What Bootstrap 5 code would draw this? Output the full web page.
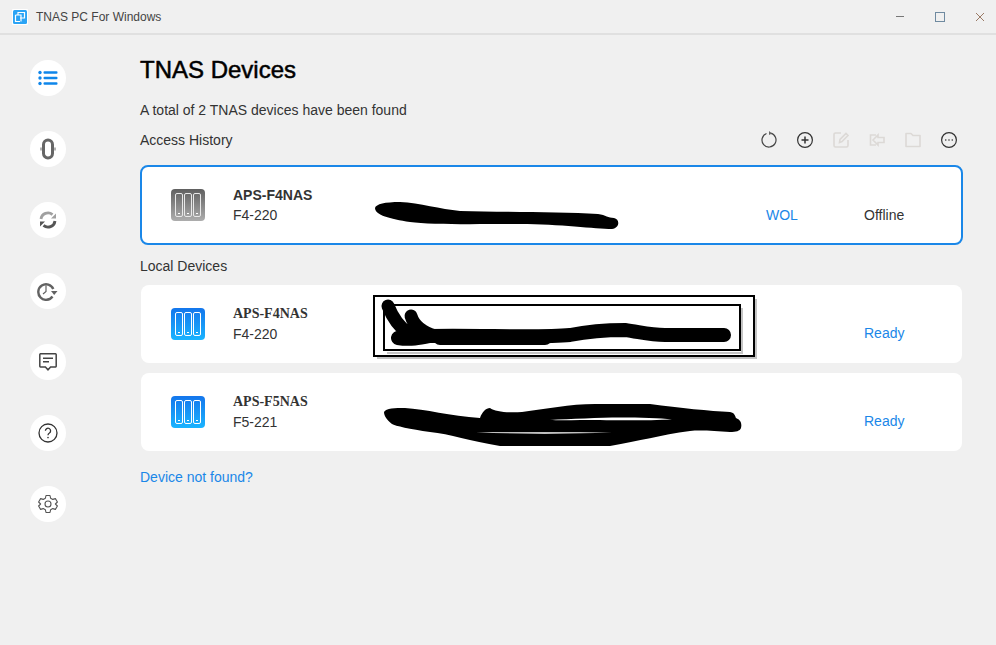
<!DOCTYPE html>
<html lang="en">
<head>
    <meta charset="UTF-8">
    <meta name="viewport" content="width=device-width, initial-scale=1">
    <link href="https://cdn.jsdelivr.net/npm/bootstrap@5.3.3/dist/css/bootstrap.min.css" rel="stylesheet">
    <script src="https://cdn.jsdelivr.net/npm/bootstrap@5.3.3/dist/js/bootstrap.bundle.min.js"></script>
    <title>TNAS PC For Windows</title>
    <style>
        html, body { height: 100%; }
        body { background: #f0f0f0; color: #333; font-family: "Liberation Sans", Arial, sans-serif; font-size: 14px; overflow: hidden; }
        a { color: #1a87e8; text-decoration: none; }
        .title-bar { height: 35px; border-bottom: 2px solid #e0e0e0; padding-left: 12px; font-size: 12px; color: #444; }
        .win-btns { margin-right: -4px; }
        .win-btn { width: 40px; height: 34px; }
        .side-bar { width: 96px; padding-top: 25px; gap: 35px; }
        .side-circle { width: 36px; height: 36px; }
        .main-area { width: 823px; margin-left: 44px; }
        .page-title { font-size: 24px; font-weight: 400; color: #000; -webkit-text-stroke: .5px #000; line-height: 30px; margin: 20px 0 0; }
        .found-line { margin-top: 15px; line-height: 20px; }
        .history-row { height: 32px; margin-top: 4px; margin-bottom: 9px; }
        .tool-gap { gap: 16px; padding-right: 4px; }
        .device-card { height: 78px; border: 0; border-radius: 8px; margin: 0 1px 10px; }
        .device-card.active-card { height: 80px; border: 2px solid #1a87e8; margin: 0; }
        .device-icon { margin-left: 30px; margin-right: 28px; }
        .active-card .device-icon { margin-left: 29px; }
        .device-name { font-weight: 700; line-height: 18px; }
        .name-serif { font-family: "Liberation Serif", serif; }
        .device-model { line-height: 18px; margin-top: 2px; }
        .state-a { position: absolute; left: 624px; top: 38px; }
        .state-b { position: absolute; left: 722px; top: 38px; }
        .state-c { position: absolute; left: 723px; top: 38px; }
        .scrawl { position: absolute; left: 0; top: 0; overflow: visible; }
        .section-label { line-height: 20px; margin: 11px 0 9px; }
        .not-found { line-height: 20px; margin-top: 16px; display: block; }
    </style>
</head>
<body>

<div class="title-bar d-flex align-items-center justify-content-between">
    <div class="d-flex align-items-center gap-2">
        <svg width="16" height="16" viewBox="0 0 16 16">
            <rect width="16" height="16" rx="1" fill="#fff"/>
            <rect x="1" y="1" width="14" height="14" rx="1.5" fill="#2ba4f5"/>
            <path d="M3.5 6V12.5H8M6 6V3.5H12.5V9H8M3.5 6H9V12.5" fill="none" stroke="#fff" stroke-width="1.2"/>
        </svg>
        <span>TNAS PC For Windows</span>
    </div>
    <div class="win-btns d-flex">
        <div class="win-btn d-flex align-items-center justify-content-center">
            <svg width="10" height="10" viewBox="0 0 10 10"><path d="M1 4.5H9" stroke="#777"/></svg>
        </div>
        <div class="win-btn d-flex align-items-center justify-content-center">
            <svg width="10" height="10" viewBox="0 0 10 10"><rect x=".5" y=".5" width="9" height="9" fill="none" stroke="#6f8aa0"/></svg>
        </div>
        <div class="win-btn d-flex align-items-center justify-content-center">
            <svg width="10" height="10" viewBox="0 0 10 10"><path d="M1 1L9 9M9 1L1 9" stroke="#9a7a66"/></svg>
        </div>
    </div>
</div>

<div class="d-flex">
    <div class="side-bar d-flex flex-column align-items-center">
        <div class="side-circle rounded-circle bg-white d-flex align-items-center justify-content-center">
            <svg width="20" height="16" viewBox="0 0 20 16" fill="#0f86ea">
                <circle cx="2" cy="2.5" r="1.7"/><circle cx="2" cy="8" r="1.7"/><circle cx="2" cy="13.5" r="1.7"/>
                <rect x="5.5" y="1.3" width="14" height="2.4" rx="1"/><rect x="5.5" y="6.8" width="14" height="2.4" rx="1"/><rect x="5.5" y="12.3" width="14" height="2.4" rx="1"/>
            </svg>
        </div>
        <div class="side-circle rounded-circle bg-white d-flex align-items-center justify-content-center">
            <svg width="16" height="22" viewBox="0 0 16 22" fill="none" stroke="#666" stroke-width="3">
                <rect x="3.5" y="2" width="9" height="18" rx="4.5"/>
                <path d="M1 9.5V12.5M15 9.5V12.5" stroke-width="1"/>
            </svg>
        </div>
        <div class="side-circle rounded-circle bg-white d-flex align-items-center justify-content-center">
            <svg width="18" height="18" viewBox="0 0 18 18" fill="none" stroke-width="2.8">
                <path d="M2 8A7 7 0 0 1 13.5 3.6" stroke="#a0a0a0"/>
                <path d="M16 10A7 7 0 0 1 4.5 14.4" stroke="#555"/>
                <path d="M12 7.5H17V2.5Z" fill="#a0a0a0" stroke="none"/>
                <path d="M6 10.5H1V15.5Z" fill="#555" stroke="none"/>
            </svg>
        </div>
        <div class="side-circle rounded-circle bg-white d-flex align-items-center justify-content-center">
            <svg width="22" height="20" viewBox="0 0 22 20" fill="none" stroke="#626262" stroke-width="2.4">
                <path d="M16.3 8A7.8 7.8 0 1 0 15.5 15.5"/>
                <path d="M9 4.5V10.5L6 13" stroke-width="1.2"/>
                <path d="M14 10H20.5L17.2 14Z" fill="#626262" stroke="none"/>
            </svg>
        </div>
        <div class="side-circle rounded-circle bg-white d-flex align-items-center justify-content-center">
            <svg width="20" height="20" viewBox="0 0 20 20" fill="none" stroke="#444" stroke-width="1.5">
                <path d="M2.5 1.8H17.5A.8 .8 0 0 1 18.2 2.5V14.2A.8 .8 0 0 1 17.5 15H12.6L10 17.8L7.4 15H2.5A.8 .8 0 0 1 1.8 14.2V2.5A.8 .8 0 0 1 2.5 1.8Z"/>
                <path d="M5 6.2H15M5 9.8H11" stroke-width="1.6"/>
            </svg>
        </div>
        <div class="side-circle rounded-circle bg-white d-flex align-items-center justify-content-center">
            <svg width="20" height="20" viewBox="0 0 20 20" fill="none" stroke="#333" stroke-width="1.3">
                <circle cx="10" cy="10" r="9"/>
                <path d="M7.4 7.8A2.6 2.6 0 1 1 11.4 10C10.4 10.6 10 11 10 12.2"/>
                <circle cx="10" cy="14.6" r=".8" fill="#333" stroke="none"/>
            </svg>
        </div>
        <div class="side-circle rounded-circle bg-white d-flex align-items-center justify-content-center">
            <svg width="20" height="20" viewBox="0 0 20 20" fill="none" stroke="#555" stroke-width="1.1">
                <path d="M8 1.5H12L12.6 4.2L14.8 5.4L17.4 4.6L19.4 8L17.4 10L19.4 12L17.4 15.4L14.8 14.6L12.6 15.8L12 18.5H8L7.4 15.8L5.2 14.6L2.6 15.4L.6 12L2.6 10L.6 8L2.6 4.6L5.2 5.4L7.4 4.2Z" stroke-linejoin="round"/>
                <circle cx="10" cy="10" r="3"/>
            </svg>
        </div>
    </div>

    <div class="main-area position-relative">
        <h1 class="page-title">TNAS Devices</h1>
        <div class="found-line">A total of 2 TNAS devices have been found</div>

        <div class="history-row d-flex align-items-center justify-content-between">
            <span>Access History</span>
            <div class="tool-gap d-flex align-items-center">
                <svg width="20" height="20" viewBox="0 0 20 20" fill="none" stroke="#444" stroke-width="1.2">
                    <path d="M11.5 3.2A7 7 0 1 1 7.5 3.5"/><path d="M10 1L13 3.4L10 5Z" fill="#666" stroke="none"/>
                </svg>
                <svg width="20" height="20" viewBox="0 0 20 20" fill="none" stroke="#333" stroke-width="1.2">
                    <circle cx="10" cy="10" r="7.4"/><path d="M6.5 10H13.5M10 6.5V13.5" stroke-width="1.5"/>
                </svg>
                <svg width="20" height="20" viewBox="0 0 20 20" fill="none" stroke="#dcd9d6" stroke-width="1.6">
                    <path d="M10 3H4.5A1.5 1.5 0 0 0 3 4.5V15.5A1.5 1.5 0 0 0 4.5 17H15.5A1.5 1.5 0 0 0 17 15.5V10"/>
                    <path d="M8.5 12.5L9 9.5L15 3.5L17 5.5L11 11.5Z"/>
                </svg>
                <svg width="20" height="20" viewBox="0 0 20 20" fill="none" stroke="#dcd9d6" stroke-width="1.6">
                    <path d="M9 5H3.5V15H9"/><path d="M6 10L11 5V7.5H17V12.5H11V15Z"/>
                </svg>
                <svg width="20" height="20" viewBox="0 0 20 20" fill="none" stroke="#dcd9d6" stroke-width="1.6">
                    <path d="M3 3.5H8L10 5.5H17V16.5H3Z" stroke-linejoin="round"/>
                </svg>
                <svg width="20" height="20" viewBox="0 0 20 20" fill="none" stroke="#333" stroke-width="1.2">
                    <circle cx="10" cy="10" r="7.4"/>
                    <path d="M6 10H7.4M9.3 10H10.7M12.6 10H14" stroke="#555" stroke-width="1.5"/>
                </svg>
            </div>
        </div>

        <div class="device-card active-card card position-relative flex-row align-items-center">
            <svg class="device-icon" width="34" height="34" viewBox="0 0 34 34">
                <defs>
                    <linearGradient id="grayFill" x1="0" y1="0" x2="0" y2="1"><stop offset="0" stop-color="#606060"/><stop offset="1" stop-color="#adadad"/></linearGradient>
                    <linearGradient id="blueFill" x1="0" y1="0" x2="0" y2="1"><stop offset="0" stop-color="#1476ec"/><stop offset="1" stop-color="#1ab4ff"/></linearGradient>
                </defs>
                <rect width="34" height="32" y="1" rx="4" fill="url(#grayFill)"/>
                <g fill="none" stroke="#e8e8e8"><rect x="4.5" y="5.5" width="7" height="23" rx="1.5"/><rect x="13.5" y="5.5" width="7" height="23" rx="1.5"/><rect x="22.5" y="5.5" width="7" height="23" rx="1.5"/></g>
                <path d="M7 25.5H9M16 25.5H18M25 25.5H27" stroke="#fff"/>
            </svg>
            <div>
                <div class="device-name">APS-F4NAS</div>
                <div class="device-model">F4-220</div>
            </div>
            <a class="state-a" href="#">WOL</a>
            <span class="state-b">Offline</span>
            <svg class="scrawl" width="819" height="76" viewBox="142 167 819 76">
                <path d="M375 208C376 204 385 202 400 202C420 203 440 209 460 211C500 212 560 212 598 214C606 215 608 218 614 218C620 219 620 228 612 229C595 229 560 224 520 224C480 224 430 225 410 222C390 219 375 215 375 208Z" fill="#000"/>
            </svg>
        </div>

        <div class="section-label">Local Devices</div>

        <div class="device-card card position-relative flex-row align-items-center">
            <svg class="device-icon" width="34" height="34" viewBox="0 0 34 34">
                <rect width="34" height="32" y="1" rx="4" fill="url(#blueFill)"/>
                <g fill="none" stroke="#fff"><rect x="4.5" y="5.5" width="7" height="23" rx="1.5"/><rect x="13.5" y="5.5" width="7" height="23" rx="1.5"/><rect x="22.5" y="5.5" width="7" height="23" rx="1.5"/></g>
                <path d="M7 25.5H9M16 25.5H18M25 25.5H27" stroke="#fff"/>
            </svg>
            <div>
                <div class="device-name name-serif">APS-F4NAS</div>
                <div class="device-model">F4-220</div>
            </div>
            <a class="state-c" href="#">Ready</a>
            <svg class="scrawl" width="821" height="78" viewBox="141 285 821 78" fill="none" stroke="#000">
                <path d="M756 299V358H377M742 308V353H387" stroke="#c4c4c4" stroke-width="2"/>
                <rect x="374" y="296" width="380" height="60" stroke-width="2"/>
                <rect x="384" y="305" width="356" height="45" stroke-width="2"/>
                <g stroke-linecap="round" stroke-linejoin="round">
                    <path d="M388 306C392 316 398 326 408 333M411 316C414 326 422 332 435 336" stroke-width="13"/>
                    <path d="M398 338C410 340 420 338 430 336C480 335 540 338 570 335C590 331 610 330 625 330C640 332 650 335 665 335H724" stroke-width="14"/>
                    <path d="M440 338H545" stroke-width="14"/>
                </g>
            </svg>
        </div>

        <div class="device-card card position-relative flex-row align-items-center">
            <svg class="device-icon" width="34" height="34" viewBox="0 0 34 34">
                <rect width="34" height="32" y="1" rx="4" fill="url(#blueFill)"/>
                <g fill="none" stroke="#fff"><rect x="4.5" y="5.5" width="7" height="23" rx="1.5"/><rect x="13.5" y="5.5" width="7" height="23" rx="1.5"/><rect x="22.5" y="5.5" width="7" height="23" rx="1.5"/></g>
                <path d="M7 25.5H9M16 25.5H18M25 25.5H27" stroke="#fff"/>
            </svg>
            <div>
                <div class="device-name name-serif">APS-F5NAS</div>
                <div class="device-model">F5-221</div>
            </div>
            <a class="state-c" href="#">Ready</a>
            <svg class="scrawl" width="821" height="78" viewBox="141 373 821 78">
                <path d="M384 412C386 408 395 408 405 408C425 409 450 416 480 418C482 412 486 408 490 408C495 412 510 413 522 412C545 409 570 404 595 404H650C680 408 710 411 730 412C735 413 735 416 736 418C741 420 742 424 741 428C740 431 736 432 730 432C715 431 700 430 690 431C660 435 640 441 610 446H500C470 441 450 434 430 432C410 429 395 426 392 424C387 420 384 416 384 412Z" fill="#000"/>
                <path d="M476 432.5C520 432 570 432 612 432.5C570 434 520 434 476 432.5Z" fill="#fff"/>
                <path d="M550 420C570 419 600 417.5 620 417.5C640 417.5 660 418 672 419.5C650 420.5 620 420.5 600 420C580 420 560 420.5 550 420Z" fill="#fff"/>
            </svg>
        </div>

        <a class="not-found" href="#">Device not found?</a>
    </div>
</div>

</body>
</html>
